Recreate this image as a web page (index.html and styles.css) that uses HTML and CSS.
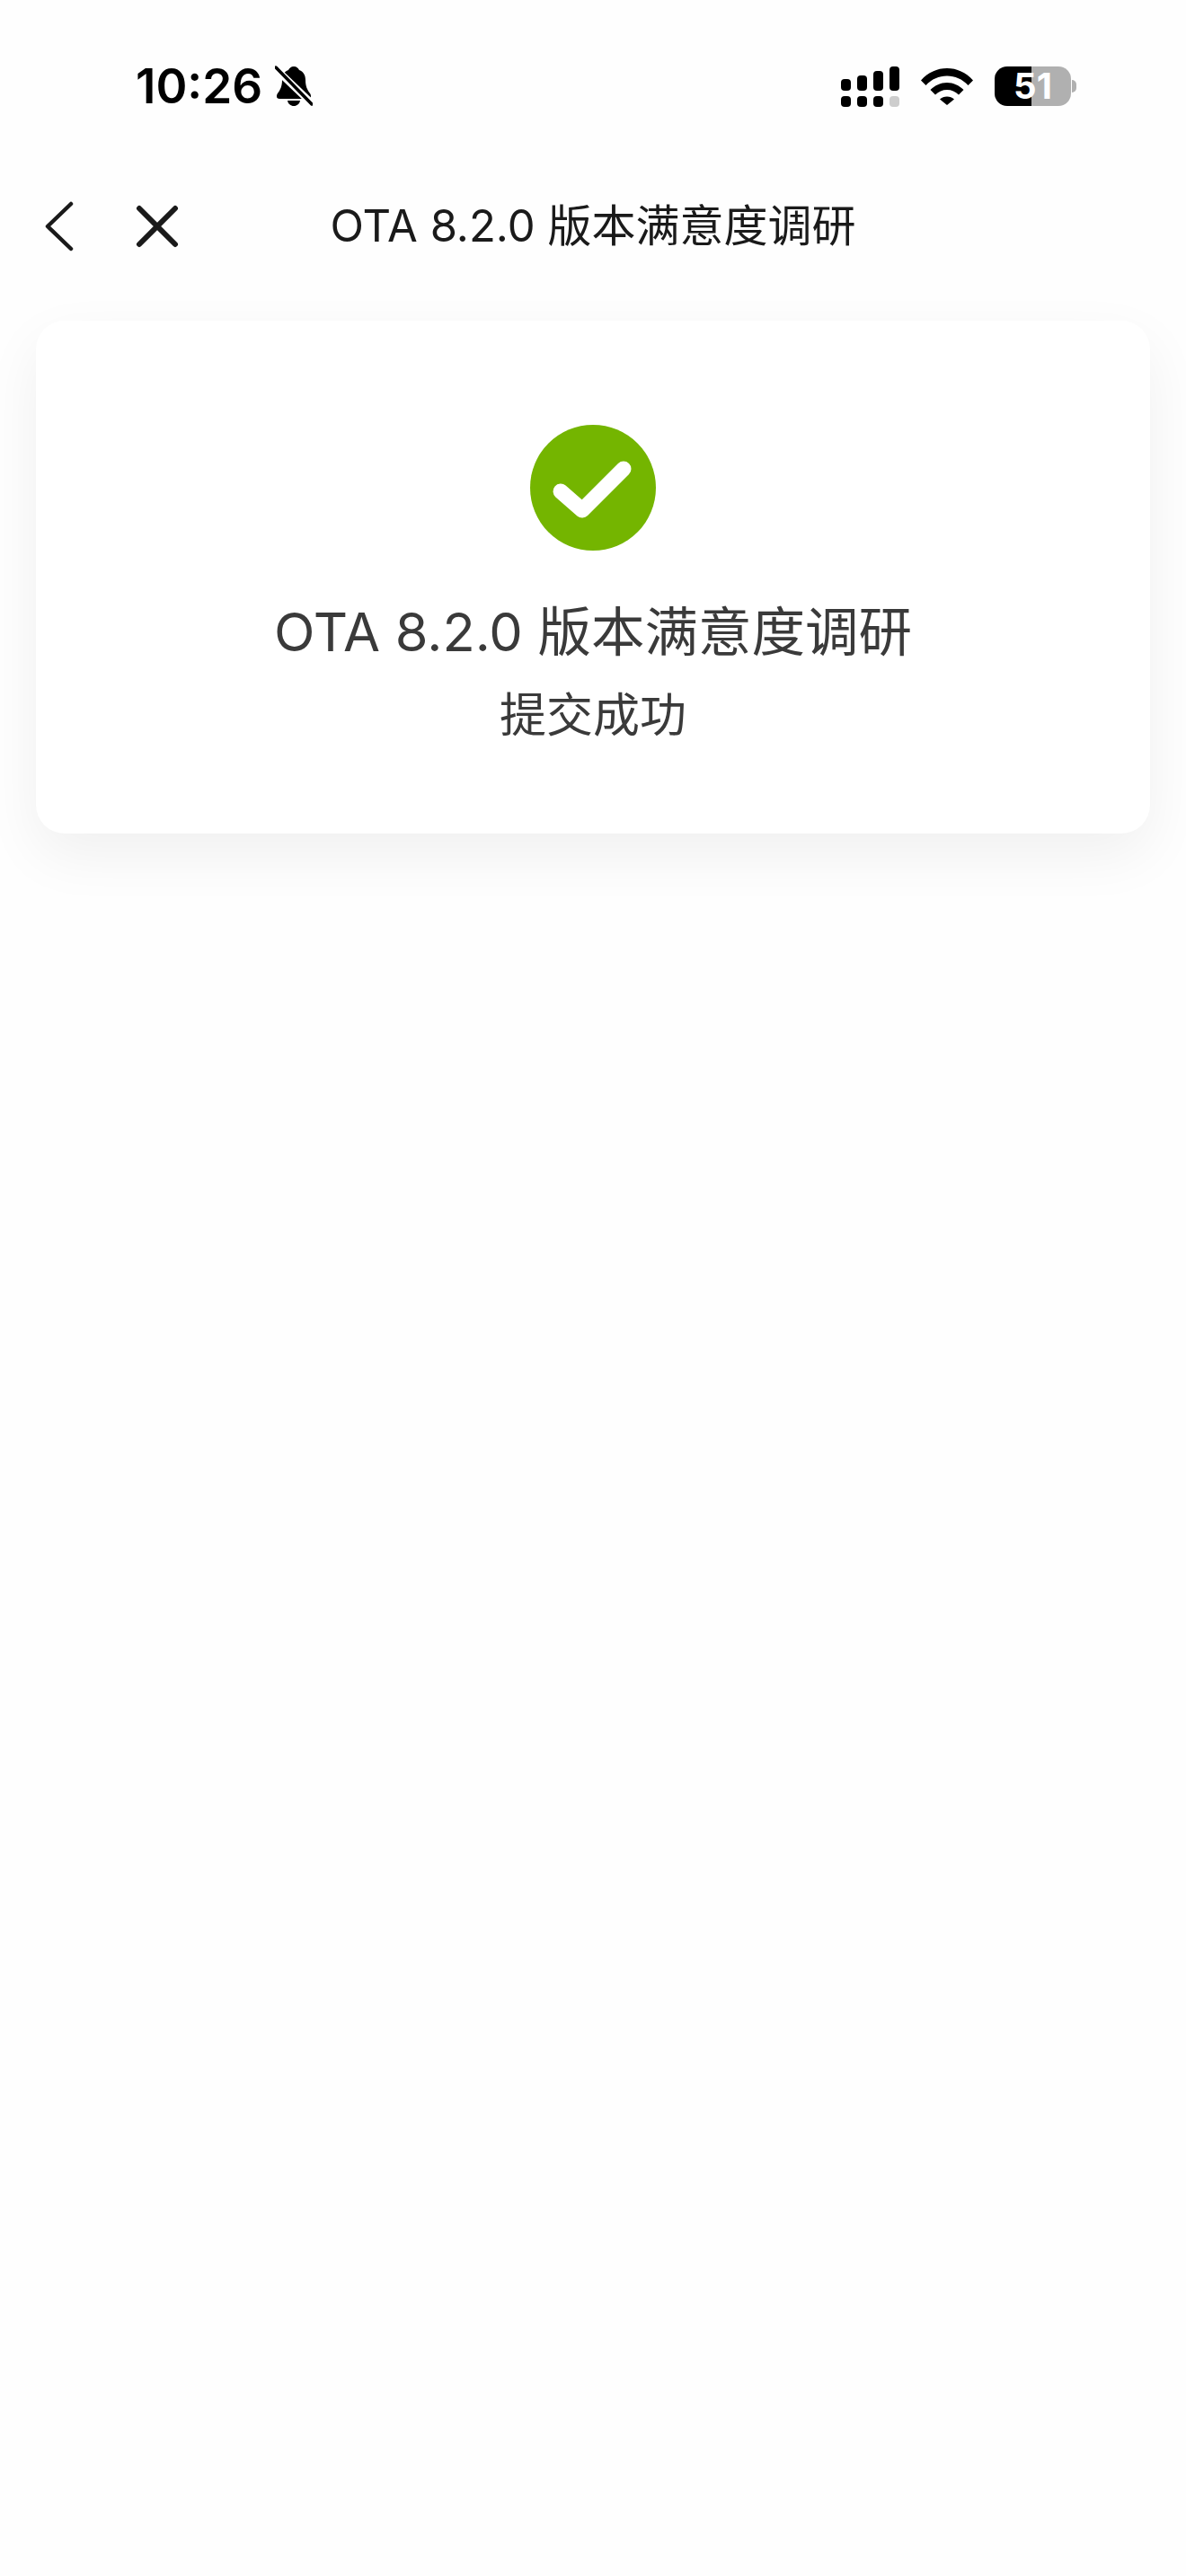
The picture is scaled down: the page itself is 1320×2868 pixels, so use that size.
FILE: index.html
```html
<!DOCTYPE html>
<html lang="zh-CN">
<head>
  <meta charset="UTF-8" />
  <meta name="viewport" content="width=device-width, initial-scale=1.0" />
  <title>OTA 8.2.0 版本满意度调研</title>
  <link rel="stylesheet" href="styles.css">
</head>
<body>
  <!-- Status bar -->
  <div class="status-bar">
    <div class="status-left">
      <span class="time">10:26</span>
      <svg class="bell" viewBox="0 0 42 46" width="42" height="46">
        <path d="M21 1c3 0 5 2 6 4 5 2 7 6 7 11 0 7 2 11 5 15 2 3 1 6-2 6H5c-3 0-4-3-2-6 3-4 5-8 5-15 0-5 2-9 7-11 1-2 3-4 6-4z" fill="#000"/>
        <path d="M14 39h14c-.5 3.500-3.500 6-7 6s-6.500-2.500-7-6z" fill="#000"/>
        <path d="M-1 2 42 43" stroke="#fefefe" stroke-width="8"/>
        <path d="M1 2 41 43" stroke="#000" stroke-width="3.500" stroke-linecap="round"/>
      </svg>
    </div>
    <div class="status-right">
      <div class="signal">
        <span class="bar"></span><span class="bar"></span><span class="bar"></span><span class="bar"></span>
        <span class="dot"></span><span class="dot"></span><span class="dot"></span><span class="dot off"></span>
      </div>
      <svg class="wifi" viewBox="0 0 58 42" width="58" height="42">
        <path d="M0 14.500C8 5.500 18 1 29 1s21 4.500 29 13.500l-5.500 5.500C46 13 38 9.500 29 9.500S12 13 5.500 20z" fill="#000"/>
        <path d="M10.500 25C15.500 20 22 17 29 17s13.500 3 18.500 8L42 30.500C38.500 27 34 25 29 25s-9.500 2-13 5.500z" fill="#000"/>
        <path d="M21 35.500C23 33.500 26 32.500 29 32.500s6 1 8 3L29 42z" fill="#000"/>
      </svg>
      <div class="battery">
        <div class="battery-body"><span class="battery-text">51</span></div>
        <div class="battery-nib"></div>
      </div>
    </div>
  </div>

  <!-- Nav bar -->
  <div class="nav-bar">
    <div class="nav-icons">
      <svg class="icon-back" viewBox="0 0 32 56" width="32" height="56">
        <path d="M29 3 3 28l26 25" fill="none" stroke="#1a1a1a" stroke-width="4.500" stroke-linecap="round" stroke-linejoin="round"/>
      </svg>
      <svg class="icon-close" viewBox="0 0 48 48" width="48" height="48">
        <path d="M4 4l40 40M44 4 4 44" fill="none" stroke="#1a1a1a" stroke-width="6" stroke-linecap="round"/>
      </svg>
    </div>
    <div class="nav-title">OTA 8.2.0 版本满意度调研</div>
  </div>

  <!-- Result card -->
  <div class="card">
    <svg class="check" viewBox="0 0 140 140" width="140" height="140">
      <circle cx="70" cy="70" r="70" fill="#74b500"/>
      <path d="M34 74l24 21 46-46" fill="none" stroke="#fff" stroke-width="17" stroke-linecap="round" stroke-linejoin="round"/>
    </svg>
    <div class="card-title">OTA 8.2.0 版本满意度调研</div>
    <div class="card-sub">提交成功</div>
  </div>
</body>
</html>
```

FILE: styles.css
```css
* {
  margin: 0;
  padding: 0;
  box-sizing: border-box;
}
body {
  font-family: Inter, "Noto Sans CJK SC", sans-serif;
  background-color: #fefefe;
  height: 2868px;
  overflow: hidden;
}
/* Status bar */
.status-bar {
  display: flex;
  justify-content: space-between;
  align-items: center;
  height: 192px;
  padding: 0 122px 0 151px;
}
.status-left {
  display: flex;
  align-items: center;
  gap: 14px;
}
.time {
  font-size: 53px;
  font-weight: 600;
  line-height: 60px;
  color: #000;
}
.status-right {
  display: flex;
  align-items: center;
  gap: 24px;
}
.signal {
  display: grid;
  grid-template-columns: repeat(4, 11px);
  grid-template-rows: 27px 12px;
  column-gap: 7px;
  row-gap: 6px;
  align-items: end;
}
.bar {
  background-color: #000;
  border-radius: 4px;
  height: 13px;
}
.bar:nth-child(2) { height: 17px; }
.bar:nth-child(3) { height: 22px; }
.bar:nth-child(4) { height: 27px; }
.dot {
  background-color: #000;
  border-radius: 4px;
  height: 12px;
}
.dot.off {
  background-color: #cdcdcd;
}
.battery {
  display: flex;
  align-items: center;
  gap: 1px;
}
.battery-body {
  display: flex;
  justify-content: center;
  align-items: center;
  width: 85px;
  height: 44px;
  border-radius: 14px;
  background: linear-gradient(90deg, #000 48%, #b0b0b0 48%);
}
.battery-text {
  font-size: 40px;
  font-weight: 700;
  line-height: 44px;
  color: #fff;
}
.battery-nib {
  width: 5px;
  height: 14px;
  border-radius: 0 6px 6px 0;
  background-color: #b0b0b0;
}
/* Nav bar */
.nav-bar {
  position: relative;
  display: flex;
  align-items: center;
  height: 120px;
  padding-left: 50px;
}
.nav-icons {
  display: flex;
  align-items: center;
  gap: 69px;
}
.nav-title {
  position: absolute;
  left: 0;
  right: 0;
  text-align: center;
  font-size: 49px;
  line-height: 60px;
  color: #1a1a1a;
}
/* Result card */
.card {
  display: flex;
  flex-direction: column;
  align-items: center;
  height: 571px;
  margin: 45px 40px 0;
  padding-top: 116px;
  background-color: #fff;
  border-radius: 32px;
  box-shadow: 0 24px 64px rgba(0, 0, 0, 0.06);
}
.card-title {
  margin-top: 48px;
  font-size: 59.500px;
  line-height: 84px;
  color: #3a3a3a;
}
.card-sub {
  margin-top: 16px;
  font-size: 52px;
  line-height: 72px;
  color: #3a3a3a;
}
```
